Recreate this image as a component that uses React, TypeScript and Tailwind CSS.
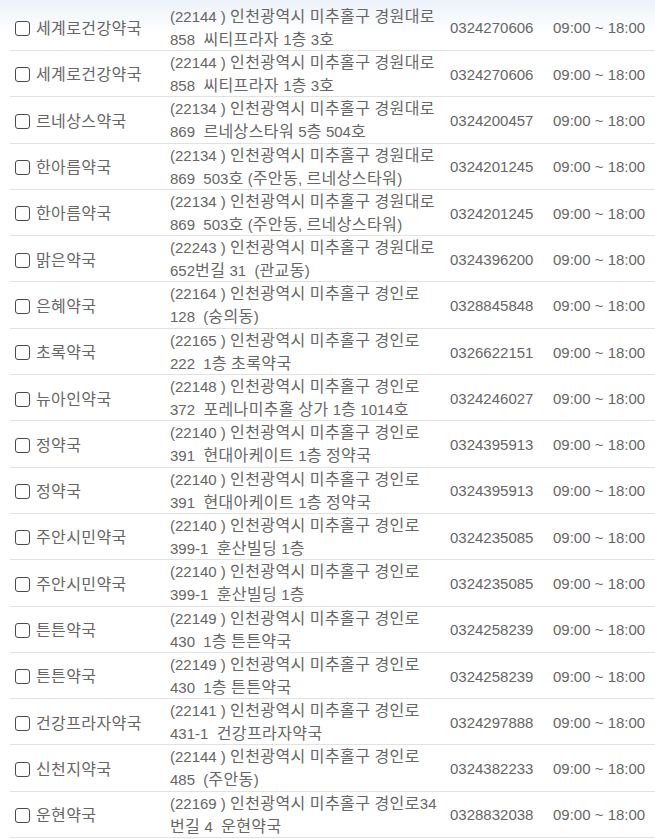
import React from "react";

type Row = { name: string; a1: string; a2: string; phone: string };

const rows: Row[] = [
  { name: "세계로건강약국", a1: "(22144 ) 인천광역시 미추홀구 경원대로", a2: "858\u00a0 씨티프라자 1층 3호", phone: "0324270606" },
  { name: "세계로건강약국", a1: "(22144 ) 인천광역시 미추홀구 경원대로", a2: "858\u00a0 씨티프라자 1층 3호", phone: "0324270606" },
  { name: "르네상스약국", a1: "(22134 ) 인천광역시 미추홀구 경원대로", a2: "869\u00a0 르네상스타워 5층 504호", phone: "0324200457" },
  { name: "한아름약국", a1: "(22134 ) 인천광역시 미추홀구 경원대로", a2: "869\u00a0 503호 (주안동, 르네상스타워)", phone: "0324201245" },
  { name: "한아름약국", a1: "(22134 ) 인천광역시 미추홀구 경원대로", a2: "869\u00a0 503호 (주안동, 르네상스타워)", phone: "0324201245" },
  { name: "맑은약국", a1: "(22243 ) 인천광역시 미추홀구 경원대로", a2: "652번길 31\u00a0 (관교동)", phone: "0324396200" },
  { name: "은혜약국", a1: "(22164 ) 인천광역시 미추홀구 경인로", a2: "128\u00a0 (숭의동)", phone: "0328845848" },
  { name: "초록약국", a1: "(22165 ) 인천광역시 미추홀구 경인로", a2: "222\u00a0 1층 초록약국", phone: "0326622151" },
  { name: "뉴아인약국", a1: "(22148 ) 인천광역시 미추홀구 경인로", a2: "372\u00a0 포레나미추홀 상가 1층 1014호", phone: "0324246027" },
  { name: "정약국", a1: "(22140 ) 인천광역시 미추홀구 경인로", a2: "391\u00a0 현대아케이트 1층 정약국", phone: "0324395913" },
  { name: "정약국", a1: "(22140 ) 인천광역시 미추홀구 경인로", a2: "391\u00a0 현대아케이트 1층 정약국", phone: "0324395913" },
  { name: "주안시민약국", a1: "(22140 ) 인천광역시 미추홀구 경인로", a2: "399-1\u00a0 훈산빌딩 1층", phone: "0324235085" },
  { name: "주안시민약국", a1: "(22140 ) 인천광역시 미추홀구 경인로", a2: "399-1\u00a0 훈산빌딩 1층", phone: "0324235085" },
  { name: "튼튼약국", a1: "(22149 ) 인천광역시 미추홀구 경인로", a2: "430\u00a0 1층 튼튼약국", phone: "0324258239" },
  { name: "튼튼약국", a1: "(22149 ) 인천광역시 미추홀구 경인로", a2: "430\u00a0 1층 튼튼약국", phone: "0324258239" },
  { name: "건강프라자약국", a1: "(22141 ) 인천광역시 미추홀구 경인로", a2: "431-1\u00a0 건강프라자약국", phone: "0324297888" },
  { name: "신천지약국", a1: "(22144 ) 인천광역시 미추홀구 경인로", a2: "485\u00a0 (주안동)", phone: "0324382233" },
  { name: "운현약국", a1: "(22169 ) 인천광역시 미추홀구 경인로34", a2: "번길 4\u00a0 운현약국", phone: "0328832038" },
];

function K({ s }: { s: string }) {
  const parts = s.split(/([\uac00-\ud7a3]+)/);
  return (
    <>
      {parts.map((p, i) =>
        /^[\uac00-\ud7a3]+$/.test(p) ? (
          <span key={i} className="text-[16px] tracking-[0.4px]">
            {p}
          </span>
        ) : (
          <React.Fragment key={i}>{p}</React.Fragment>
        )
      )}
    </>
  );
}

export default function App() {
  return (
    <div
      className="w-[655px] h-[839px] overflow-hidden bg-[linear-gradient(to_bottom,#edf2fa,#ffffff_34px)] text-[#666] text-[15px]"
      style={{ fontFamily: '"Liberation Sans", "Noto Sans CJK KR", sans-serif' }}
    >
      <div className="pt-[4.7px] pl-[10px]">
        {rows.map((r, i) => (
          <div
            key={i}
            className="grid grid-cols-[160px_280px_103px_1fr] h-[46.3px] border-b border-[#e2e2e2] box-border"
          >
            <div className="flex items-center pl-[5px] gap-[6px] pt-[2px] leading-[23px]">
              <span className="inline-block w-[15px] h-[15px] rounded-[3px] border border-[#4a4a4a] bg-white shrink-0" />
              <span className="whitespace-nowrap">
                <K s={r.name} />
              </span>
            </div>
            <div className="leading-[23px] whitespace-pre">
              <div>
                <K s={r.a1} />
              </div>
              <div>
                <K s={r.a2} />
              </div>
            </div>
            <div className="flex items-center pt-[2px] whitespace-nowrap">{r.phone}</div>
            <div className="flex items-center pt-[2px] whitespace-nowrap">09:00 ~ 18:00</div>
          </div>
        ))}
      </div>
    </div>
  );
}
